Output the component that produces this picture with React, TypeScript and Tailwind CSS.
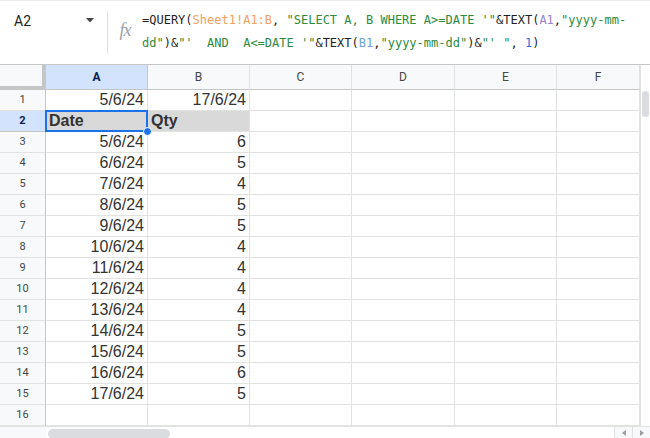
import React from "react";

const rows: [string, string][] = [
  ["5/6/24", "17/6/24"],
  ["Date", "Qty"],
  ["5/6/24", "6"],
  ["6/6/24", "5"],
  ["7/6/24", "4"],
  ["8/6/24", "5"],
  ["9/6/24", "5"],
  ["10/6/24", "4"],
  ["11/6/24", "4"],
  ["12/6/24", "4"],
  ["13/6/24", "4"],
  ["14/6/24", "5"],
  ["15/6/24", "5"],
  ["16/6/24", "6"],
  ["17/6/24", "5"],
  ["", ""],
];

const cols = [
  { l: "A", w: "w-[102px]" },
  { l: "B", w: "w-[102px]" },
  { l: "C", w: "w-[102px]" },
  { l: "D", w: "w-[103px]" },
  { l: "E", w: "w-[102px]" },
  { l: "F", w: "w-[83px]" },
];

const D = ({ children }: { children: React.ReactNode }) => <span className="text-[#1f1f1f]">{children}</span>;
const G = ({ children }: { children: React.ReactNode }) => <span className="text-[#2e8b3e]">{children}</span>;
const O = ({ children }: { children: React.ReactNode }) => <span className="text-[#f0a060]">{children}</span>;
const P = ({ children }: { children: React.ReactNode }) => <span className="text-[#9a7fd1]">{children}</span>;
const B = ({ children }: { children: React.ReactNode }) => <span className="text-[#6fa3dc]">{children}</span>;
const N = ({ children }: { children: React.ReactNode }) => <span className="text-[#2a6fd6]">{children}</span>;

export default function App() {
  return (
    <div className="w-[650px] h-[438px] overflow-hidden bg-white flex flex-col" style={{ fontFamily: '"Liberation Sans", Arial, sans-serif' }}>
      {/* Formula bar */}
      <div className="h-[65px] shrink-0 flex border-b border-[#c4c7c5] border-t border-t-[#eeeeee]">
        <div className="w-[107px] shrink-0 flex items-start pt-[11px] pl-[14px] pr-[13px] justify-between">
          <span className="text-[14px] text-[#1f1f1f] leading-[18px]" style={{ fontFamily: 'Roboto, "Liberation Sans", sans-serif' }}>A2</span>
          <svg width="8" height="5" viewBox="0 0 8 5" className="mt-[6px]">
            <path d="M0 0 L8 0 L4 4.5 Z" fill="#444746" />
          </svg>
        </div>
        <div className="w-px bg-[#dadce0] my-[11px]" />
        <div className="w-[34px] shrink-0 flex items-center justify-center pb-[4px]">
          <span className="text-[18px] italic text-[#9aa0a6] tracking-[-1px]" style={{ fontFamily: '"Liberation Serif", serif' }}>fx</span>
        </div>
        <div className="flex-1 pt-[8px] text-[12px] leading-[23px] whitespace-pre" style={{ fontFamily: '"DejaVu Sans Mono", "Liberation Mono", monospace' }}>
          <div>
            <D>=QUERY(</D><O>Sheet1!A1:B</O><D>, </D><G>"SELECT A, B WHERE A&gt;=DATE '"</G><D>&amp;TEXT(</D><P>A1</P><D>,</D><G>"yyyy-mm-</G>
          </div>
          <div>
            <G>dd"</G><D>)&amp;</D><G>"'  AND  A&lt;=DATE '"</G><D>&amp;TEXT(</D><B>B1</B><D>,</D><G>"yyyy-mm-dd"</G><D>)&amp;</D><G>"' "</G><D>, </D><N>1</N><D>)</D>
          </div>
        </div>
      </div>

      {/* Grid */}
      <div className="flex flex-1 min-h-0">
        <div className="flex flex-col">
          {/* Header row */}
          <div className="flex h-[25px] shrink-0">
            <div className="w-[46px] h-[25px] bg-[#f8f9fa] border-r-[4px] border-b-[4px] border-[#c4c7c5]" />
            {cols.map((c) => (
              <div
                key={c.l}
                className={`${c.w} h-[25px] flex items-center justify-center text-[12px] border-r border-b ${
                  c.l === "A"
                    ? "bg-[#d3e3fd] text-[#0b1f4d] font-bold border-b-[#c4c7c5] border-r-[#c4c7c5]"
                    : "bg-[#f8f9fa] text-[#444746] border-r-[#e1e3e1] border-b-[#c4c7c5]"
                }`}
                style={{ fontFamily: 'Roboto, "Liberation Sans", sans-serif' }}
              >
                {c.l}
              </div>
            ))}
          </div>
          {/* Data rows */}
          {rows.map((r, i) => {
            const n = i + 1;
            const sel = n === 2;
            return (
              <div key={n} className="flex h-[21px] shrink-0">
                <div
                  className={`w-[46px] h-[21px] flex items-center justify-center text-[11px] border-r border-b border-r-[#c4c7c5] ${
                    sel ? "bg-[#d3e3fd] text-[#0b1f4d] font-bold border-b-[#c4c7c5]" : "bg-[#f8f9fa] text-[#444746] border-b-[#e1e3e1]"
                  }`}
                  style={{ fontFamily: 'Roboto, "Liberation Sans", sans-serif' }}
                >
                  {n}
                </div>
                {cols.map((c, ci) => {
                  const v = ci === 0 ? r[0] : ci === 1 ? r[1] : "";
                  const header = sel && ci < 2;
                  const active = sel && ci === 0;
                  return (
                    <div
                      key={c.l}
                      className={`${c.w} h-[21px] relative border-r border-b border-[#e1e3e1] text-[16px] leading-[20px] text-[#333333] ${
                        header ? "bg-[#d9d9d9] font-bold text-left pl-[3px]" : "text-right pr-[3px]"
                      } ${active ? "z-10" : ""}`}
                    >
                      {v}
                      {active && (
                        <>
                          <div className="absolute -left-px -top-px -right-px -bottom-px border-2 border-[#1a73e8] pointer-events-none" />
                          <div className="absolute -right-[5px] -bottom-[5px] w-[9px] h-[9px] rounded-full bg-[#1a73e8] border border-white" />
                        </>
                      )}
                    </div>
                  );
                })}
              </div>
            );
          })}
        </div>
        {/* Vertical scrollbar */}
        <div className="flex-1 border-l border-[#e1e3e1] bg-white relative">
          <div className="absolute left-[1px] top-[26px] w-[7px] h-[26px] rounded-full bg-[#dadce0]" />
        </div>
      </div>

      {/* Horizontal scrollbar */}
      <div className="h-[12px] shrink-0 flex border-t border-[#e1e3e1]">
        <div className="w-[46px] bg-[#f8f9fa]" />
        <div className="flex-1 relative">
          <div className="absolute left-[2px] top-[2px] w-[122px] h-[10px] rounded-full bg-[#dadce0]" />
          <div className="absolute right-0 top-0 h-[12px] flex">
            <div className="w-[18px] h-[12px] flex items-center justify-center border-l border-[#e1e3e1] bg-[#f8f9fa]">
              <svg width="4" height="6" viewBox="0 0 4 6"><path d="M4 0 L0 3 L4 6 Z" fill="#9aa0a6" /></svg>
            </div>
            <div className="w-[18px] h-[12px] flex items-center justify-center border-l border-[#e1e3e1] bg-[#f8f9fa]">
              <svg width="4" height="6" viewBox="0 0 4 6"><path d="M0 0 L4 3 L0 6 Z" fill="#9aa0a6" /></svg>
            </div>
          </div>
        </div>
      </div>
    </div>
  );
}
